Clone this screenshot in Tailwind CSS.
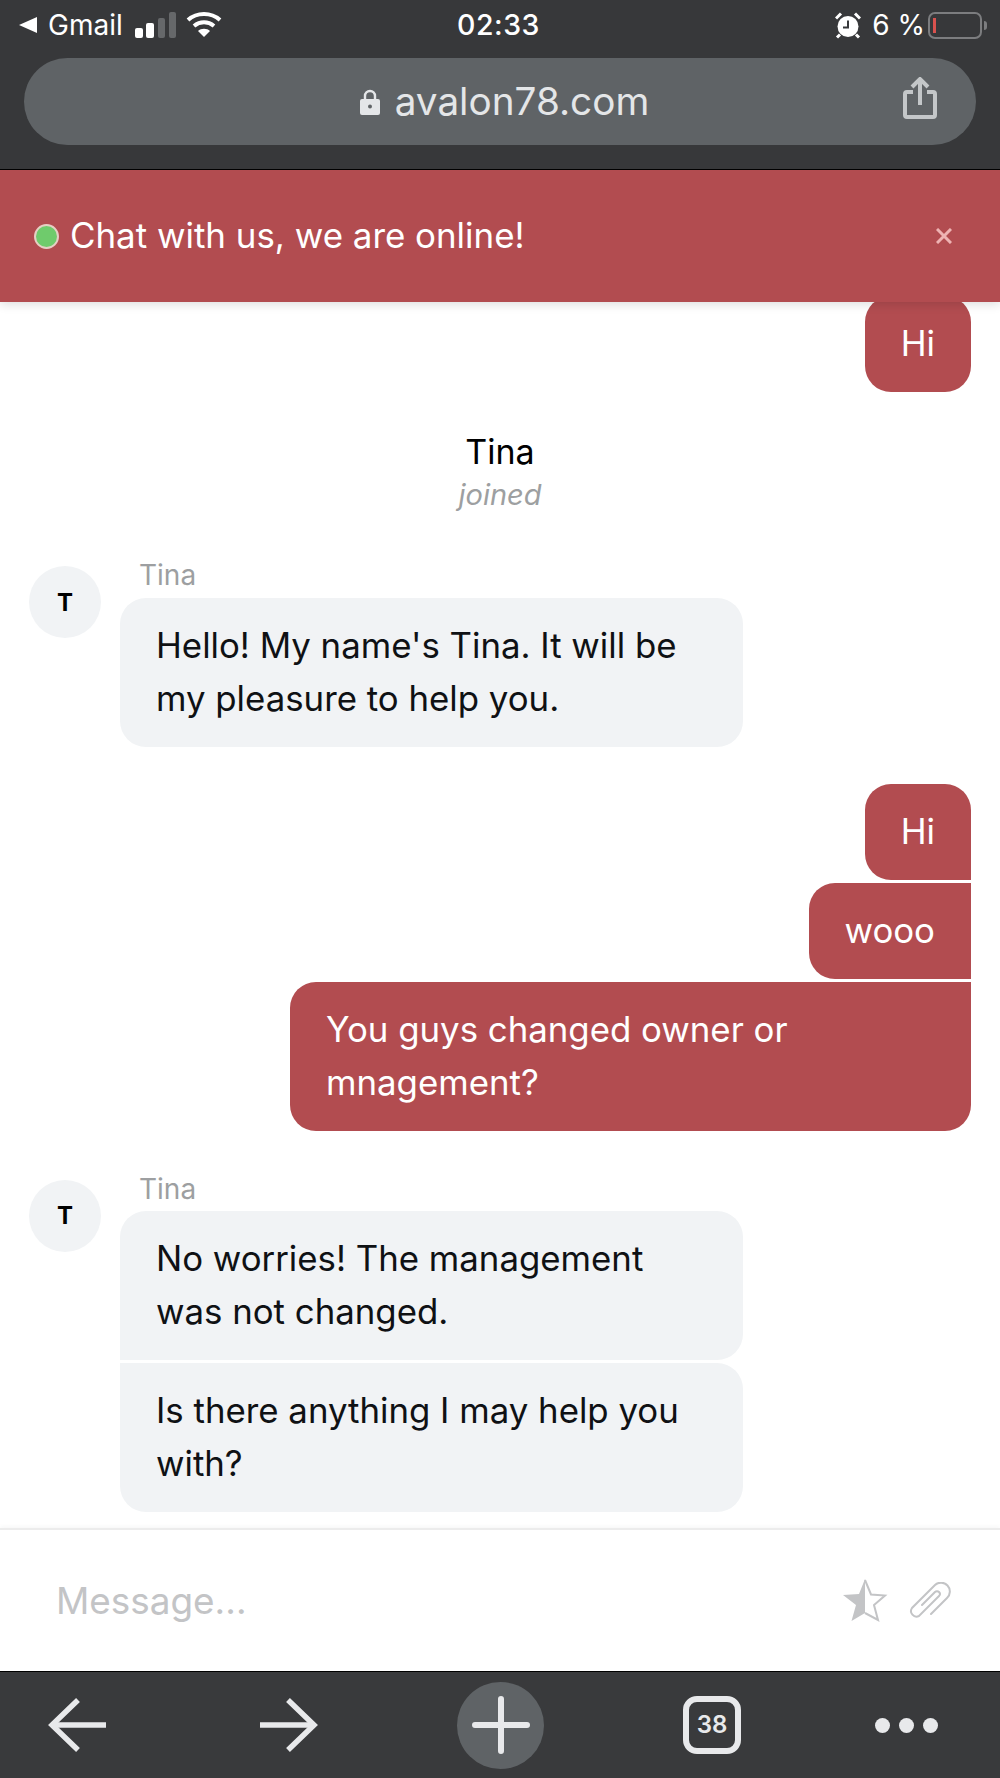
<!DOCTYPE html>
<html lang="en">
<head>
  <meta charset="UTF-8">
  <meta name="viewport" content="width=device-width, initial-scale=1.0">
  <title>Chat</title>
  <script src="https://cdn.jsdelivr.net/npm/@tailwindcss/browser@4"></script>
</head>
<body class="bg-white font-['Inter',sans-serif] text-[#0f1114]">
  <div class="flex h-[1778px] w-[1000px] flex-col overflow-hidden">
    <!-- Browser top bar -->
    <header class="relative z-20 h-[170px] shrink-0 border-b border-black bg-[#37383a] px-[24px] text-white">
      <div class="flex h-[58px] items-center justify-between pb-[8px]">
        <div class="flex w-[300px] items-center">
          <svg class="ml-[-6px] h-[18px] w-[20px]" viewBox="0 0 20 18"><path d="M1 9 19 1v16z" fill="#fff"/></svg>
          <span class="ml-[10px] text-[28px] leading-none">Gmail</span>
          <svg class="ml-[12px] h-[27px] w-[42px]" viewBox="0 0 42 27">
            <rect x="0" y="16" width="8" height="10" rx="2" fill="#fff"/>
            <rect x="11" y="11" width="8" height="15" rx="2" fill="#fff"/>
            <rect x="23" y="6" width="7" height="20" rx="2" fill="#66686a"/>
            <rect x="34" y="0" width="7" height="26" rx="2" fill="#66686a"/>
          </svg>
          <svg class="ml-[9px] h-[28px] w-[36px]" viewBox="0 0 36 28" fill="none" stroke="#fff" stroke-width="4">
            <path d="M2 9c9-8 23-8 32 0"/>
            <path d="M8 15c6-5 14-5 20 0"/>
            <path d="M18 26l-6-6c3-3 9-3 12 0z" fill="#fff" stroke="none"/>
          </svg>
        </div>
        <span class="mr-[9px] text-[28.5px] font-medium leading-none tracking-[0.5px]">02:33</span>
        <div class="mr-[-6px] flex w-[300px] items-center justify-end">
          <svg class="h-[27px] w-[26px]" viewBox="0 0 26 26">
            <circle cx="13" cy="14" r="10.5" fill="#fff"/>
            <path d="M13 8v7H8" fill="none" stroke="#37383a" stroke-width="2"/>
            <path d="M1 6l5-5M25 6l-5-5M5 22l-3 3M21 22l3 3" stroke="#fff" stroke-width="3" fill="none"/>
          </svg>
          <span class="ml-[11px] text-[28px] leading-none">6 %</span>
          <div class="relative ml-[3px] h-[27px] w-[54px] rounded-[7px] border-2 border-[#7c7d7f]">
            <div class="absolute left-[3px] top-[4px] h-[15px] w-[3px] bg-[#d9524e]"></div>
            <div class="absolute right-[-7px] top-[7px] h-[9px] w-[3px] rounded-r-full bg-[#7c7d7f]"></div>
          </div>
        </div>
      </div>
      <div class="relative flex h-[87px] items-center justify-center rounded-full bg-[#5f6366]">
        <svg class="ml-[9px] mr-[15px] h-[26px] w-[20px]" viewBox="0 0 20 26">
          <path d="M5 11V7a5 5 0 0 1 10 0v4" fill="none" stroke="#e4e6e8" stroke-width="2.4"/>
          <rect x="0" y="10" width="20" height="16" rx="2" fill="#e4e6e8"/>
          <circle cx="10" cy="17.5" r="2" fill="#5f6366"/>
        </svg>
        <span class="text-[38.7px] leading-none text-[#e4e6e8]">avalon78.com</span>
        <svg class="absolute right-[39px] top-[19px] h-[42px] w-[34px]" viewBox="0 0 34 42" fill="none" stroke="#c4c7c9" stroke-width="4">
          <path d="M10 15H4a2 2 0 0 0-2 2v21a2 2 0 0 0 2 2h26a2 2 0 0 0 2-2V17a2 2 0 0 0-2-2h-6"/>
          <path d="M17 28V3"/>
          <path d="M9 10l8-8 8 8"/>
        </svg>
      </div>
    </header>

    <!-- Banner -->
    <div class="relative z-10 flex h-[132px] shrink-0 items-center justify-between bg-[#b24c50] pl-[34px] pr-[48px] text-white shadow-[0_2px_10px_rgba(0,0,0,0.14)]">
      <div class="flex items-center">
        <div class="h-[25px] w-[25px] rounded-full border-2 border-[#e6cfc4] bg-[#6fcb6c]"></div>
        <span class="mb-[2px] ml-[11px] text-[34.9px] leading-none">Chat with us, we are online!</span>
      </div>
      <svg class="h-[16px] w-[16px]" viewBox="0 0 16 16" stroke="#eeb3b3" stroke-width="3"><path d="M1 1l14 14M15 1L1 15"/></svg>
    </div>

    <!-- Messages -->
    <main class="-mt-[6px] flex flex-1 flex-col overflow-hidden pl-[29px] pr-[29px] text-[34.8px] leading-[53px]">
      <div class="flex justify-end">
        <div class="rounded-[26px] bg-[#b24c50] px-[36px] pb-[22.5px] pt-[20.5px] text-white">Hi</div>
      </div>

      <div class="mt-[35px] text-center">
        <div class="text-[34px] leading-[50px] text-black">Tina</div>
        <div class="text-[29px] italic leading-[36px] text-[#9d9fa1]">joined</div>
      </div>

      <div class="mt-[46px] flex">
        <div class="mt-[7px] flex h-[72px] w-[72px] shrink-0 items-center justify-center rounded-full bg-[#f1f3f5] text-[24px] font-bold text-black">T</div>
        <div class="ml-[19px] w-[623px]">
          <div class="mb-[7px] pl-[19px] text-[28px] leading-[32px] text-[#9d9fa1]">Tina</div>
          <div class="rounded-[26px] bg-[#f1f3f5] px-[36px] pb-[22.5px] pt-[20.5px]">Hello! My name's Tina. It will be my pleasure to help you.</div>
        </div>
      </div>

      <div class="mt-[37px] flex flex-col items-end gap-[3px] text-white">
        <div class="rounded-[26px] rounded-br-none bg-[#b24c50] px-[36px] pb-[22.5px] pt-[20.5px]">Hi</div>
        <div class="rounded-l-[26px] bg-[#b24c50] px-[36px] pb-[22.5px] pt-[20.5px]">wooo</div>
        <div class="w-[681px] rounded-l-[26px] rounded-br-[26px] bg-[#b24c50] px-[36px] pb-[22.5px] pt-[20.5px]">You guys changed owner or mnagement?</div>
      </div>

      <div class="mt-[42px] flex">
        <div class="mt-[7px] flex h-[72px] w-[72px] shrink-0 items-center justify-center rounded-full bg-[#f1f3f5] pb-[2px] text-[24px] font-bold text-black">T</div>
        <div class="ml-[19px] w-[623px]">
          <div class="mb-[6px] pl-[19px] text-[28px] leading-[32px] text-[#9d9fa1]">Tina</div>
          <div class="flex flex-col gap-[3px]">
            <div class="rounded-[26px] rounded-bl-none bg-[#f1f3f5] px-[36px] pb-[22.5px] pt-[20.5px]">No worries! The management was not changed.</div>
            <div class="rounded-[26px] rounded-tl-none bg-[#f1f3f5] px-[36px] pb-[22.5px] pt-[20.5px]">Is there anything I may help you with?</div>
          </div>
        </div>
      </div>
    </main>

    <!-- Message input -->
    <div class="flex h-[143px] shrink-0 items-center justify-between border-t-2 border-[#ececec] pl-[56px] pr-[49px] shadow-[0_-2px_4px_rgba(0,0,0,0.03)]">
      <span class="mt-[2px] text-[36.9px] leading-none text-[#c3c4c6]">Message...</span>
      <div class="flex items-center">
        <svg class="h-[43px] w-[45px]" viewBox="0 0 45 43">
          <path d="M22 0V34L8.5 42 13 26 0 16 16 15z" fill="#c3c4c6"/>
          <path d="M22 1l6 14.5 14 1-11 9.5 4 15-13-7" fill="none" stroke="#c3c4c6" stroke-width="2"/>
        </svg>
        <svg class="ml-[21px] h-[38px] w-[42px]" viewBox="0 0 42 38" fill="none" stroke="#c3c4c6" stroke-width="2" stroke-linecap="round">
          <path d="M22 32 38 16A8.5 8.5 0 0 0 26 3L3 26A5.5 5.5 0 0 0 10 34L30 14A2.8 2.8 0 0 0 26 10L13 23"/>
        </svg>
      </div>
    </div>

    <!-- Browser bottom bar -->
    <nav class="flex h-[107px] shrink-0 items-center border-t border-black bg-[#393a3c] pl-[48px]">
      <svg class="h-[54px] w-[58px]" viewBox="0 0 58 54" fill="none" stroke="#e8e9eb" stroke-width="5.5">
        <path d="M58 27H4"/>
        <path d="M30 2 4 27l26 25"/>
      </svg>
      <svg class="ml-[154px] h-[54px] w-[58px]" viewBox="0 0 58 54" fill="none" stroke="#e8e9eb" stroke-width="5.5">
        <path d="M0 27h54"/>
        <path d="M28 2l26 25-26 25"/>
      </svg>
      <div class="ml-[139px] flex h-[87px] w-[87px] items-center justify-center rounded-full bg-[#5f6366]">
        <svg class="h-[58px] w-[58px]" viewBox="0 0 58 58" stroke="#e8e9eb" stroke-width="6" stroke-linecap="round"><path d="M29 3v52M3 29h52"/></svg>
      </div>
      <div class="ml-[139px] flex h-[58px] w-[58px] items-center justify-center rounded-[14px] border-[6px] border-[#e8e9eb] text-[24px] font-semibold text-[#e8e9eb]">38</div>
      <div class="ml-[134px] flex gap-[9px]">
        <div class="h-[15px] w-[15px] rounded-full bg-[#e8e9eb]"></div>
        <div class="h-[15px] w-[15px] rounded-full bg-[#e8e9eb]"></div>
        <div class="h-[15px] w-[15px] rounded-full bg-[#e8e9eb]"></div>
      </div>
    </nav>
  </div>
</body>
</html>
